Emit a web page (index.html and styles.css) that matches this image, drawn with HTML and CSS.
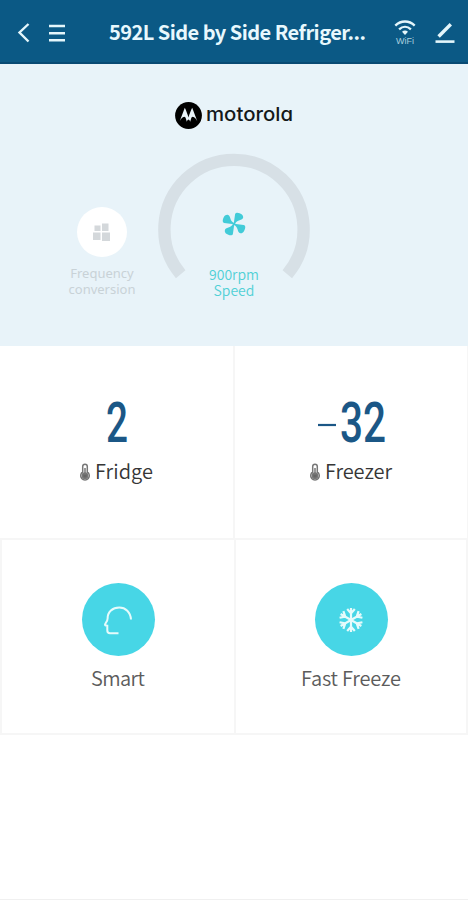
FILE: index.html
```html
<!DOCTYPE html>
<html lang="en">
<head>
    <meta charset="UTF-8">
    <meta name="viewport" content="width=device-width, initial-scale=1.0">
    <title>592L Side by Side Refrigerator</title>
    <link rel="stylesheet" href="styles.css">
</head>
<body>
    <header class="topbar">
        <svg class="icon-back" viewBox="0 0 14 22"><path d="M11.5 2L2.5 10.5l9 9"/></svg>
        <svg class="icon-menu" viewBox="0 0 18 20"><path d="M1 3h16M1 10.2h16M1 17.3h16"/></svg>
        <h1 class="title"><svg width="260" height="34"><text x="1" y="24" textLength="257">592L Side by Side Refriger...</text></svg></h1>
        <div class="wifi">
            <svg width="22" height="16" viewBox="0 0 22 16">
                <path d="M1.3 5.6C7 .2 15 .2 20.7 5.6M5.1 9.3c3.6-3.3 8.2-3.3 11.8 0"/>
                <path class="dot" d="M8 11.7q3-2.2 6 0L11 15z"/>
            </svg>
            <span>WiFi</span>
        </div>
        <svg class="icon-edit" viewBox="0 0 20 22"><path d="M3.6 14.5L15.8 2.2"/><path class="line" d="M.5 19.6h19"/></svg>
    </header>

    <section class="hero">
        <div class="brand">
            <svg width="27" height="27" viewBox="0 0 27 27">
                <circle cx="13.5" cy="13.5" r="13.4"/>
                <path d="M4.6 19.5L9.8 5.8c.8 1.4 2.6 6 3.7 9.8 1.1-3.8 2.9-8.4 3.7-9.8l5.2 13.7c-1-2.2-3-4.8-4.6-4.8-.9 0-1.4.8-1.8 2.3l-.8 2.8c-.5-1.7-1.2-2.4-1.7-2.4s-1.2.7-1.7 2.4l-.8-2.8c-.4-1.5-.9-2.3-1.8-2.3-1.6 0-3.6 2.6-4.6 4.8z"/>
            </svg>
            <svg class="brand-name" width="90" height="28"><text x="2" y="20" textLength="87" lengthAdjust="spacingAndGlyphs">motorola</text></svg>
        </div>
        <div class="controls">
            <div class="frequency">
                <div class="round">
                    <svg width="20" height="20" viewBox="0 0 20 20"><path d="M2.5 3.5h6V9h-6zM10 1.5h6.5V9H10zM1 10.5h7.5v7.5H1zM10 10.5h8V19h-8z"/></svg>
                </div>
                <p>Frequency<br>conversion</p>
            </div>
            <div class="gauge">
                <svg class="arc" viewBox="0 0 152 130"><path d="M22.7 121.2A69.6 69.6 0 1 1 129.3 121.2"/></svg>
                <div class="fan">
                    <svg width="24" height="24" viewBox="-12 -12 24 24">
                        <g transform="rotate(8)">
                            <path id="blade" d="M-.3 0V-9.8Q-.3-11.6 1.6-11.6C5-11.6 8.2-10.4 8.2-7.6 8.2-4.2 2.2-5 1 0z"/>
                            <use href="#blade" transform="rotate(90)"/>
                            <use href="#blade" transform="rotate(180)"/>
                            <use href="#blade" transform="rotate(270)"/>
                        </g>
                    </svg>
                    <p>900rpm<br>Speed</p>
                </div>
            </div>
        </div>
    </section>

    <main>
        <div class="row temps">
            <div class="cell">
                <svg class="value" width="84" height="72"><text x="31" y="56" textLength="22" lengthAdjust="spacingAndGlyphs">2</text></svg>
                <div class="label">
                    <svg class="thermo" viewBox="0 0 12 18"><path d="M3.7 9V3.5a2.3 2.3 0 0 1 4.6 0V9a4.3 4.3 0 1 1-4.6 0z"/><circle cx="6" cy="12.7" r="2.6"/><path d="M6 5v7"/></svg>
                    <svg width="60" height="32"><text x="1" y="23" textLength="58">Fridge</text></svg>
                </div>
            </div>
            <div class="cell">
                <svg class="value" width="84" height="72"><path d="M9 39h18"/><text x="31" y="56" textLength="46" lengthAdjust="spacingAndGlyphs">32</text></svg>
                <div class="label">
                    <svg class="thermo" viewBox="0 0 12 18"><path d="M3.7 9V3.5a2.3 2.3 0 0 1 4.6 0V9a4.3 4.3 0 1 1-4.6 0z"/><circle cx="6" cy="12.7" r="2.6"/><path d="M6 5v7"/></svg>
                    <svg width="69" height="32"><text x="1" y="23" textLength="67">Freezer</text></svg>
                </div>
            </div>
        </div>
        <div class="row modes">
            <div class="cell">
                <div class="mode-icon">
                    <svg width="30" height="30" viewBox="0 0 30 30"><path d="M28 14.5C27.5 7 22.5 2.5 16.3 2.5 9.5 2.5 4.6 7 4.6 13.5c0 2.8-2.6 5-2.6 6.2 0 .9 2.3 1 2.3 1v4.8c0 2 .7 2.8 2.7 2.8h8.5"/></svg>
                </div>
                <svg width="56" height="32"><text x="1" y="23" textLength="54">Smart</text></svg>
            </div>
            <div class="cell">
                <div class="mode-icon flake">
                    <svg width="28" height="28" viewBox="-14 -14 28 28">
                        <g id="arm"><path d="M0 0v-12M-3.8-11l3.8 4.4L3.8-11"/></g>
                        <use href="#arm" transform="rotate(60)"/>
                        <use href="#arm" transform="rotate(120)"/>
                        <use href="#arm" transform="rotate(180)"/>
                        <use href="#arm" transform="rotate(240)"/>
                        <use href="#arm" transform="rotate(300)"/>
                    </svg>
                </div>
                <svg width="102" height="32"><text x="1" y="23" textLength="100">Fast Freeze</text></svg>
            </div>
        </div>
    </main>
    <footer class="bottom"></footer>
</body>
</html>
```
FILE: styles.css
```css
* {
    box-sizing: border-box;
}
body {
    font-family: "Noto Sans CJK SC", "Noto Sans", sans-serif;
    margin: 0;
    height: 900px;
    display: flex;
    flex-direction: column;
    background-color: #fff;
    overflow: hidden;
}
p, h1 {
    margin: 0;
}
svg {
    display: block;
    flex-shrink: 0;
}
.topbar {
    height: 64px;
    display: flex;
    align-items: center;
    padding: 3px 13px 0 17px;
    background: #0b5985;
    border-bottom: 2px solid #084a73;
}
.topbar path {
    fill: none;
    stroke: #e4f6fb;
    stroke-width: 2.4;
}
.icon-back {
    width: 14px;
    height: 22px;
}
.icon-menu {
    width: 18px;
    height: 20px;
    margin-left: 17px;
}
.title {
    margin-left: 42px;
    font-size: 20px;
}
.title text {
    fill: #e8f8fd;
    font-size: 20px;
    font-weight: 700;
}
.wifi {
    margin-left: 26px;
    width: 22px;
    display: flex;
    flex-direction: column;
    align-items: center;
    color: #a9cfdf;
    font: 9px/10px "Liberation Sans", sans-serif;
}
.wifi .dot {
    fill: #e4f6fb;
    stroke: none;
}
.icon-edit {
    width: 20px;
    height: 22px;
    margin-left: auto;
}
.topbar .icon-edit path {
    stroke-width: 3.4;
}
.topbar .icon-edit .line {
    stroke-width: 2.6;
}
.hero {
    height: 282px;
    padding-top: 37px;
    background: #e8f3f9;
}
.brand {
    height: 28px;
    display: flex;
    justify-content: center;
    align-items: center;
    gap: 2px;
}
.brand path {
    fill: #e8f3f9;
}
.brand-name text {
    font-family: Inter, sans-serif;
    font-feature-settings: "cv11";
    font-size: 19px;
    font-weight: 450;
    fill: #14181a;
}
.controls {
    display: grid;
    grid-template-columns: 90px 152px 90px;
    justify-content: center;
    column-gap: 11px;
    padding-top: 24px;
}
.frequency {
    display: flex;
    flex-direction: column;
    align-items: center;
    padding-top: 54px;
}
.round {
    width: 50px;
    height: 50px;
    display: flex;
    align-items: center;
    justify-content: center;
    border-radius: 50%;
    background: #fff;
}
.round path {
    fill: #d4d8db;
}
.frequency p {
    margin-top: 8px;
    text-align: center;
    font: 13px/16px "Noto Sans", sans-serif;
    color: #c8d2d7;
}
.gauge {
    display: grid;
    justify-items: center;
}
.arc, .fan {
    grid-area: 1 / 1;
}
.arc {
    width: 152px;
    height: 130px;
}
.arc path {
    fill: none;
    stroke: #d7e0e6;
    stroke-width: 12.4;
}
.fan {
    padding-top: 59px;
    color: #51d0d6;
    text-align: center;
    font-size: 14px;
    font-weight: 350;
    line-height: 16px;
}
.fan svg {
    margin: 0 auto;
    fill: #42cbd8;
}
.fan p {
    margin-top: 30px;
}
.row {
    display: grid;
}
.cell {
    display: flex;
    flex-direction: column;
    align-items: center;
    border-right: 2px solid #f6f6f6;
    border-bottom: 2px solid #f6f6f6;
}
.temps {
    grid-template-columns: 235px 233px;
}
.temps .cell {
    height: 194px;
    padding-top: 40px;
}
.temps .cell:last-child {
    border-right-width: 1px;
}
.value text {
    font-family: Roboto, sans-serif;
    font-size: 56px;
    font-weight: 500;
    fill: #1b5786;
}
.value path {
    stroke: #1b5786;
    stroke-width: 2.2;
}
.label {
    display: flex;
    align-items: center;
    gap: 3px;
    margin-top: -2px;
}
.label text {
    font-size: 20px;
    font-weight: 350;
    fill: #363636;
}
.thermo {
    width: 12px;
    height: 18px;
    fill: none;
    stroke: #777;
    stroke-width: 1.5;
}
.thermo circle {
    fill: #666;
}
.modes {
    grid-template-columns: 234px 232px;
    border-left: 2px solid #f6f6f6;
}
.modes .cell {
    height: 195px;
    padding-top: 43px;
}
.mode-icon {
    width: 73px;
    height: 73px;
    display: flex;
    align-items: center;
    justify-content: center;
    border-radius: 50%;
    background: #47d6e6;
    margin-bottom: 7px;
}
.mode-icon svg {
    fill: none;
    stroke: #e6fbfb;
    stroke-width: 2;
}
.flake svg {
    stroke-width: 2.2;
}
.modes text {
    font-size: 20px;
    font-weight: 350;
    fill: #5c5c5c;
}
.bottom {
    margin-top: auto;
    border-top: 1px solid #f0f0f0;
}
```
